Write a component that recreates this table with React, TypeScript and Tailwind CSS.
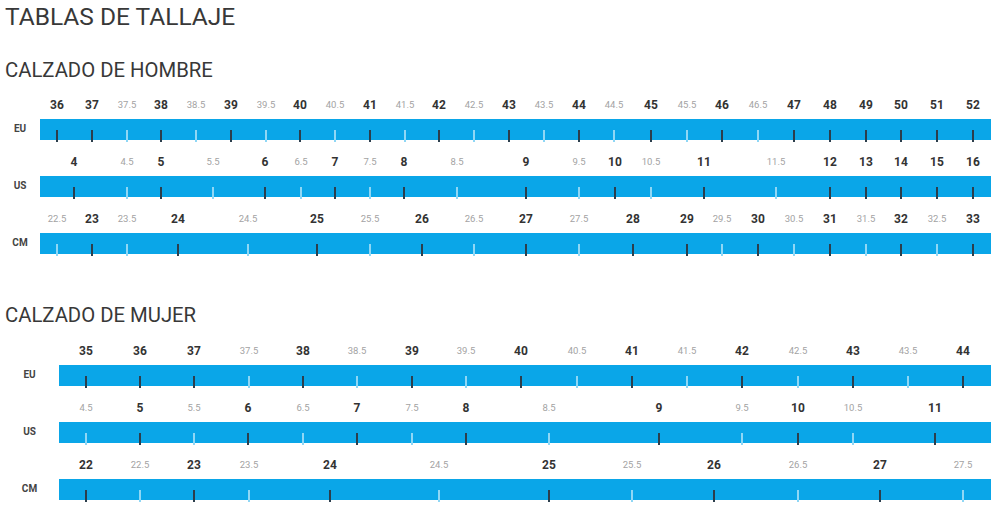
import React from 'react';

type Row = { name: string; marks: [string, number][] };

// x positions are measured in page pixels; bars start after the label column
const men: Row[] = [
  {
    name: 'EU',
    marks: [
      ['36', 57], ['37', 92], ['37.5', 127], ['38', 161], ['38.5', 196], ['39', 231], ['39.5', 266],
      ['40', 300], ['40.5', 335], ['41', 370], ['41.5', 405], ['42', 439], ['42.5', 474], ['43', 509],
      ['43.5', 544], ['44', 579], ['44.5', 614], ['45', 651], ['45.5', 687], ['46', 722], ['46.5', 758],
      ['47', 794], ['48', 830], ['49', 866], ['50', 901], ['51', 937], ['52', 973],
    ],
  },
  {
    name: 'US',
    marks: [
      ['4', 74], ['4.5', 127], ['5', 161], ['5.5', 213], ['6', 265], ['6.5', 301], ['7', 335],
      ['7.5', 370], ['8', 404], ['8.5', 457], ['9', 526], ['9.5', 579], ['10', 615], ['10.5', 651],
      ['11', 704], ['11.5', 776], ['12', 830], ['13', 866], ['14', 901], ['15', 937], ['16', 973],
    ],
  },
  {
    name: 'CM',
    marks: [
      ['22.5', 57], ['23', 92], ['23.5', 127], ['24', 178], ['24.5', 248], ['25', 317], ['25.5', 370],
      ['26', 422], ['26.5', 474], ['27', 526], ['27.5', 579], ['28', 633], ['29', 687], ['29.5', 722],
      ['30', 758], ['30.5', 794], ['31', 830], ['31.5', 866], ['32', 901], ['32.5', 937], ['33', 973],
    ],
  },
];

const women: Row[] = [
  {
    name: 'EU',
    marks: [
      ['35', 86], ['36', 140], ['37', 194], ['37.5', 249], ['38', 303], ['38.5', 357], ['39', 412],
      ['39.5', 466], ['40', 521], ['40.5', 577], ['41', 632], ['41.5', 687], ['42', 742], ['42.5', 798],
      ['43', 853], ['43.5', 908], ['44', 963],
    ],
  },
  {
    name: 'US',
    marks: [
      ['4.5', 86], ['5', 140], ['5.5', 194], ['6', 248], ['6.5', 303], ['7', 357], ['7.5', 412],
      ['8', 466], ['8.5', 549], ['9', 659], ['9.5', 742], ['10', 798], ['10.5', 853], ['11', 935],
    ],
  },
  {
    name: 'CM',
    marks: [
      ['22', 86], ['22.5', 140], ['23', 194], ['23.5', 249], ['24', 330], ['24.5', 439], ['25', 549],
      ['25.5', 632], ['26', 714], ['26.5', 798], ['27', 880], ['27.5', 963],
    ],
  },
];

const SizeChart: React.FC<{ rows: Row[]; offset: number; labelClass: string }> = ({ rows, offset, labelClass }) => (
  <div className="flex flex-col w-[991px]">
    {rows.map((row) => (
      <div key={row.name} className="flex flex-col mb-[8px]">
        <div className="flex h-[28px]">
          <div className={labelClass} />
          <div className="relative flex-1">
            {row.marks.map(([v, x]) => {
              const half = v.includes('.');
              return (
                <span
                  key={v}
                  className={
                    half
                      ? 'absolute top-1/2 -translate-x-1/2 -translate-y-1/2 text-[9.5px] leading-none text-[#a3a3a3]'
                      : 'absolute top-1/2 -translate-x-1/2 -translate-y-1/2 text-[12px] leading-none font-bold text-[#333]'
                  }
                  style={{ left: x - offset }}
                >
                  {v}
                </span>
              );
            })}
          </div>
        </div>
        <div className="flex h-[21px] items-center">
          <div className={labelClass + ' text-center text-[10px] font-bold text-[#444] -mt-[3px]'}>{row.name}</div>
          <div className="relative flex-1 h-full bg-[#0aa6e8]">
            {row.marks.map(([v, x]) => (
              <span
                key={v}
                className={
                  v.includes('.')
                    ? 'absolute top-[11px] h-[12px] w-[2px] -translate-x-1/2 bg-[#8fd7f5]'
                    : 'absolute top-[11px] h-[12px] w-[2px] -translate-x-1/2 bg-[#2c3e4c]'
                }
                style={{ left: x - offset }}
              />
            ))}
          </div>
        </div>
      </div>
    ))}
  </div>
);

export default function App() {
  return (
    <div className="w-[1000px] h-[510px] overflow-hidden bg-white text-[#383838] font-['Roboto','Liberation_Sans',sans-serif]">
      <h1 className="pl-[5px] pt-[3px] text-[24.5px] leading-[28px]">TABLAS DE TALLAJE</h1>
      <h2 className="mt-[28px] pl-[5px] text-[20.3px] leading-[22px]">CALZADO DE HOMBRE</h2>
      <div className="mt-[10px]">
        <SizeChart rows={men} offset={40} labelClass="w-[40px] shrink-0" />
      </div>
      <h2 className="mt-[42px] pl-[5px] text-[20.3px] leading-[22px]">CALZADO DE MUJER</h2>
      <div className="mt-[11px]">
        <SizeChart rows={women} offset={59} labelClass="w-[59px] shrink-0" />
      </div>
    </div>
  );
}
